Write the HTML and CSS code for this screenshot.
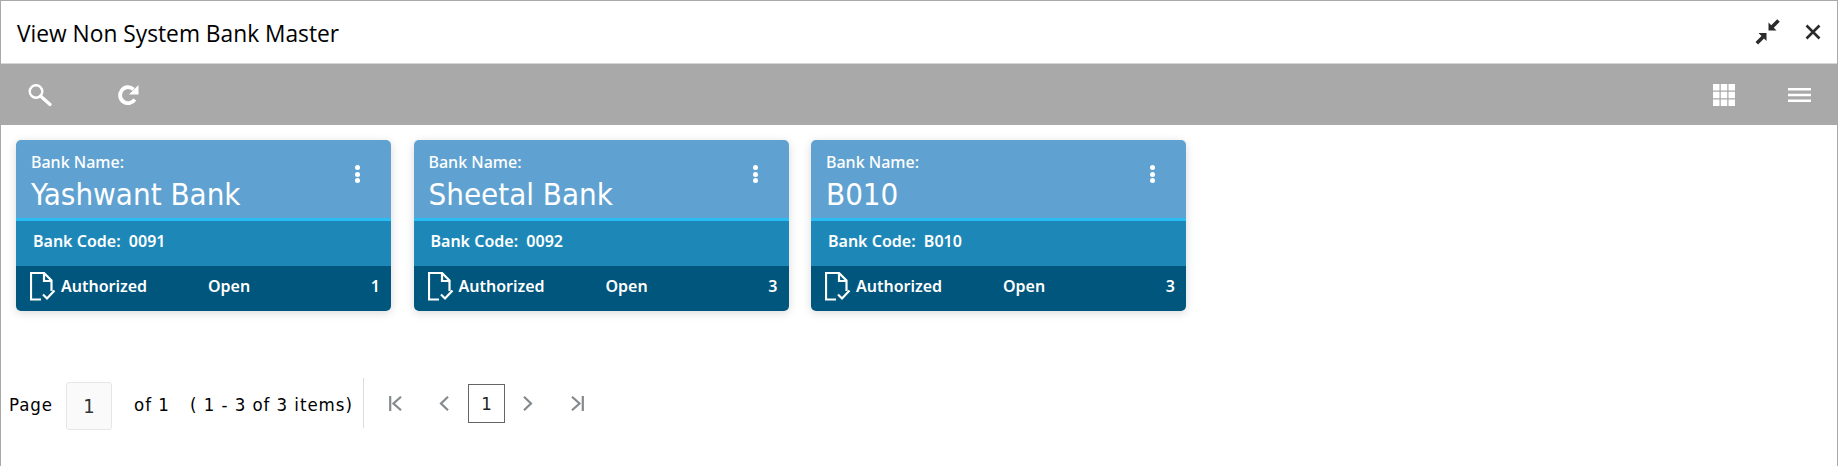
FILE: index.html
```html
<!DOCTYPE html>
<html lang="en">
<head>
<meta charset="utf-8">
<title>View Non System Bank Master</title>
<link rel="stylesheet" href="styles.css">
</head>
<body>
<div class="window">
  <header class="titlebar">
    <h1 class="title">View Non System Bank Master</h1>
    <div class="window-actions">
      <svg class="ico-min" width="26" height="26" viewBox="0 0 26 26"><path d="M13.500 11.500 V3.500 L21.500 11.500 Z M11.500 14 V22 L3.500 14 Z" fill="#2b2b2b"/><path d="M16.500 8.500 L23.500 1.500 M8 18 L1.800 24.200" stroke="#2b2b2b" stroke-width="3.600" fill="none"/></svg>
      <svg class="ico-close" width="16" height="16" viewBox="0 0 16 16"><path d="M1.500 1.500 L14.500 14.500 M14.500 1.500 L1.500 14.500" stroke="#2b2b2b" stroke-width="2.600" fill="none"/></svg>
    </div>
  </header>
  <nav class="toolbar">
    <div class="tools-left">
      <svg width="26" height="26" viewBox="0 0 26 26"><circle cx="10" cy="9.500" r="6.300" fill="none" stroke="#fff" stroke-width="2.400"/><path d="M14.500 14 L24 22.500" stroke="#fff" stroke-width="3.200" stroke-linecap="round"/></svg>
      <svg width="24" height="24" viewBox="0 0 24 24"><path d="M18.800 16.500 A8 8 0 1 1 17.500 6.300" fill="none" stroke="#fff" stroke-width="3.800"/><path d="M22.500 2 L22.500 11.500 L13 11.500 Z" fill="#fff"/></svg>
    </div>
    <div class="tools-right">
      <svg width="22" height="22" viewBox="0 0 22 22"><path fill="#fff" d="M0 0h6.500v6.500H0zM7.750 0h6.500v6.500h-6.500zM15.500 0h6.500v6.500h-6.500zM0 7.750h6.500v6.500H0zM7.750 7.750h6.500v6.500h-6.500zM15.500 7.750h6.500v6.500h-6.500zM0 15.500h6.500v6.500H0zM7.750 15.500h6.500v6.500h-6.500zM15.500 15.500h6.500v6.500h-6.500z"/></svg>
      <svg width="23" height="14" viewBox="0 0 23 14"><path fill="#fff" d="M0 0h23v2.600H0zM0 5.700h23v2.600H0zM0 11.400h23v2.600H0z"/></svg>
    </div>
  </nav>
  <main class="cards">
    <article class="card">
      <div class="card-head">
        <div class="head-text"><div class="label">Bank Name:</div><div class="name">Yashwant Bank</div></div>
        <div class="kebab"><i></i><i></i><i></i></div>
      </div>
      <div class="card-mid">Bank Code:&nbsp;&nbsp;0091</div>
      <div class="card-foot">
        <svg class="doc" width="26" height="29" viewBox="0 0 26 29"><path d="M11 27.500 H1 V1 H14 L21.500 8.500 V19 M14 1 V9 H21.500" fill="none" stroke="#fff" stroke-width="2.200"/><path d="M13 22.500 L17 26.500 L24.500 18.500" fill="none" stroke="#fff" stroke-width="2.200"/></svg>
        <span class="status">Authorized</span><span class="open">Open</span><span class="count">1</span>
      </div>
    </article>
    <article class="card">
      <div class="card-head">
        <div class="head-text"><div class="label">Bank Name:</div><div class="name">Sheetal Bank</div></div>
        <div class="kebab"><i></i><i></i><i></i></div>
      </div>
      <div class="card-mid">Bank Code:&nbsp;&nbsp;0092</div>
      <div class="card-foot">
        <svg class="doc" width="26" height="29" viewBox="0 0 26 29"><path d="M11 27.500 H1 V1 H14 L21.500 8.500 V19 M14 1 V9 H21.500" fill="none" stroke="#fff" stroke-width="2.200"/><path d="M13 22.500 L17 26.500 L24.500 18.500" fill="none" stroke="#fff" stroke-width="2.200"/></svg>
        <span class="status">Authorized</span><span class="open">Open</span><span class="count">3</span>
      </div>
    </article>
    <article class="card">
      <div class="card-head">
        <div class="head-text"><div class="label">Bank Name:</div><div class="name">B010</div></div>
        <div class="kebab"><i></i><i></i><i></i></div>
      </div>
      <div class="card-mid">Bank Code:&nbsp;&nbsp;B010</div>
      <div class="card-foot">
        <svg class="doc" width="26" height="29" viewBox="0 0 26 29"><path d="M11 27.500 H1 V1 H14 L21.500 8.500 V19 M14 1 V9 H21.500" fill="none" stroke="#fff" stroke-width="2.200"/><path d="M13 22.500 L17 26.500 L24.500 18.500" fill="none" stroke="#fff" stroke-width="2.200"/></svg>
        <span class="status">Authorized</span><span class="open">Open</span><span class="count">3</span>
      </div>
    </article>
  </main>
  <footer class="pager">
    <span class="page-label">Page</span>
    <span class="page-input">1</span>
    <span class="page-of">of 1</span>
    <span class="page-items">( 1 - 3 of 3 items)</span>
    <span class="sep"></span>
    <svg class="nav nav-first" width="13" height="15" viewBox="0 0 13 15"><path d="M1.200 0 V15 M12 0.800 L4.500 7.500 L12 14.200" fill="none" stroke="#84898c" stroke-width="2.200"/></svg>
    <svg class="nav nav-prev" width="10" height="15" viewBox="0 0 10 15"><path d="M9 0.800 L2 7.500 L9 14.200" fill="none" stroke="#84898c" stroke-width="2.200"/></svg>
    <span class="page-current">1</span>
    <svg class="nav nav-next" width="10" height="15" viewBox="0 0 10 15"><path d="M1 0.800 L8 7.500 L1 14.200" fill="none" stroke="#84898c" stroke-width="2.200"/></svg>
    <svg class="nav nav-last" width="13" height="15" viewBox="0 0 13 15"><path d="M11.800 0 V15 M1 0.800 L8.500 7.500 L1 14.200" fill="none" stroke="#84898c" stroke-width="2.200"/></svg>
  </footer>
</div>
</body>
</html>
```
FILE: styles.css
```css
* { box-sizing: border-box; }
html, body { margin: 0; padding: 0; background: #fff; }
body { width: 1838px; height: 466px; overflow: hidden; }
.window {
  height: 466px;
  border: 1px solid #a9a9a9;
  border-bottom: 0;
  display: flex;
  flex-direction: column;
  font-family: "DejaVu Sans", sans-serif;
  font-stretch: condensed;
  color: #000;
}
.titlebar {
  height: 63px;
  flex: none;
  display: flex;
  align-items: center;
  justify-content: space-between;
  padding: 0 16px 0 16px;
  border-bottom: 1px solid #d6d6d6;
}
.title { margin: 2px 0 0; font: 400 22.750px "Open Sans", sans-serif; color: #000; }
.window-actions { display: flex; align-items: center; gap: 24px; }
.toolbar {
  height: 61px;
  flex: none;
  background: #a9a9a9;
  display: flex;
  align-items: center;
  justify-content: space-between;
  padding: 0 26px 0 25px;
}
.tools-left { display: flex; align-items: center; gap: 64px; }
.tools-right { display: flex; align-items: center; gap: 53px; }
.cards {
  display: flex;
  gap: 22.500px;
  padding: 15px 15px 0;
  flex: none;
}
.card {
  width: 375px;
  height: 171px;
  border-radius: 5px;
  overflow: hidden;
  display: flex;
  flex-direction: column;
  color: #fff;
  box-shadow: 0 2px 10px rgba(0, 0, 0, 0.15);
}
.card-head {
  height: 81px;
  background: #5fa2d1;
  border-bottom: 3px solid #29bdf3;
  display: flex;
  justify-content: space-between;
  padding: 11px 31px 0 15px;
}
.label { font-family: "Noto Sans", sans-serif; font-size: 16px; font-weight: 500; line-height: 22px; }
.name { font-size: 31px; line-height: 40px; margin-top: 1px; }
.kebab { display: flex; flex-direction: column; gap: 1.500px; padding-top: 14px; }
.kebab i { width: 5px; height: 5px; border-radius: 50%; background: #fff; display: block; }
.card-mid {
  height: 45px;
  background: #1d88b8;
  display: flex;
  align-items: center;
  padding: 0 0 6px 17px;
  font-family: "Noto Sans", sans-serif;
  font-size: 16px;
  font-weight: 600;
}
.card-foot {
  height: 45px;
  background: #00567c;
  display: flex;
  align-items: center;
  padding: 0 11px 4px 14px;
  font-family: "Noto Sans", sans-serif;
  font-size: 16px;
  font-weight: 600;
}
.doc { flex: none; margin-right: 5px; }
.status { width: 147px; margin-bottom: 2px; }
.open { flex: 1; margin-bottom: 2px; }
.count { margin-bottom: 2px; }
.pager {
  display: flex;
  align-items: center;
  margin-top: 67px;
  height: 50px;
  padding-left: 8px;
  font-size: 18.500px;
  letter-spacing: 0.950px;
  color: #000;
}
.page-label { width: 57px; padding-top: 2px; }
.page-input {
  width: 46px;
  height: 48px;
  margin-top: 6px;
  background: #fafafa;
  border: 1px solid #e6e6e6;
  border-radius: 3px;
  display: flex;
  align-items: center;
  justify-content: center;
  color: #333;
  font-size: 20px;
  letter-spacing: 0;
}
.page-of { margin-left: 22px; width: 56px; padding-top: 2px; }
.page-items { width: 173px; padding-top: 2px; white-space: nowrap; }
.sep { width: 1px; height: 50px; background: #dcdcdc; margin-right: 25px; }
.page-current {
  width: 37px;
  height: 39px;
  border: 1px solid #666;
  display: flex;
  align-items: center;
  justify-content: center;
  color: #222;
  letter-spacing: 0;
  margin: 0 18px 0 19px;
}
.nav-first { margin-right: 37px; }
.nav-next { margin-right: 38px; }
```
